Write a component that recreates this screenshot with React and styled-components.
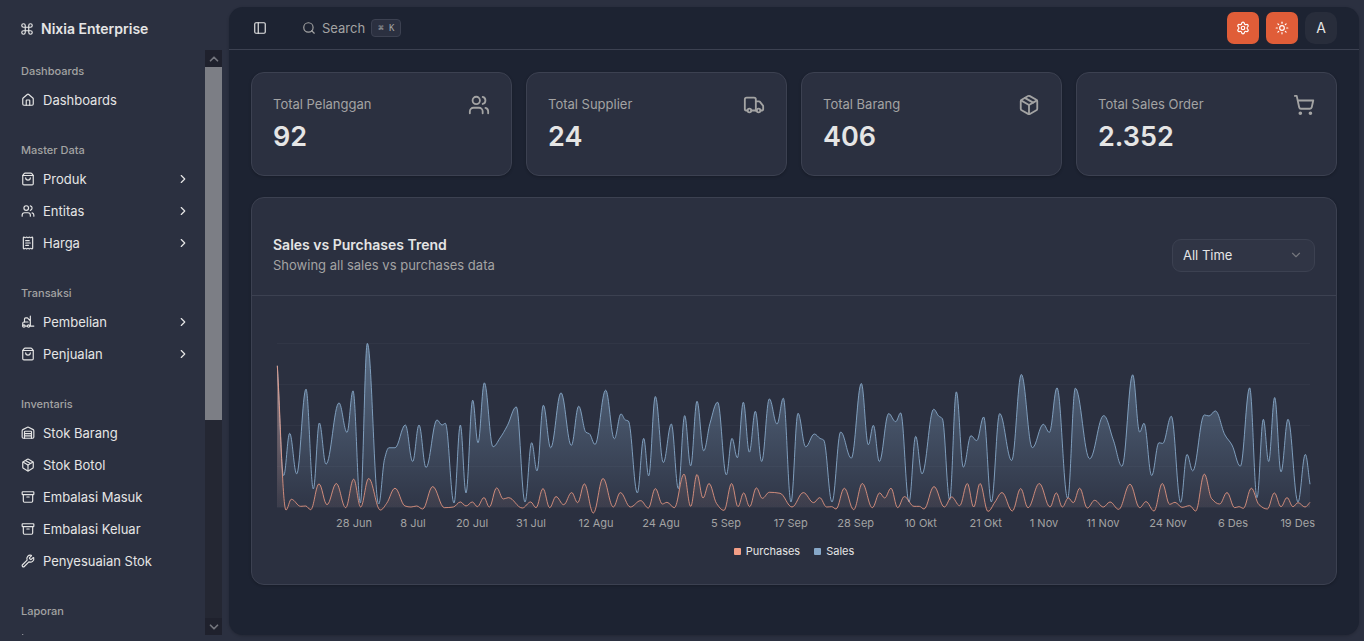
import React, { useLayoutEffect, useMemo, useRef, useState } from "react";
import styled, { createGlobalStyle, ThemeProvider } from "styled-components";
import {
  Archive,
  ChartColumn,
  ChevronDown,
  ChevronRight,
  ChevronUp,
  Command,
  Forklift,
  House,
  Package,
  PanelLeft,
  ReceiptText,
  Search,
  Settings,
  ShoppingBag,
  ShoppingCart,
  Sun,
  Truck,
  Users,
  Warehouse,
  Wrench,
} from "lucide-react";

const theme = {
  shell: "#2b3040",
  page: "#1d2332",
  card: "#2b3040",
  control: "#303545",
  border: "#3c4151",
  text: "#e5e5e5",
  muted: "#a3a3a3",
  accent: "#e05d38",
  sales: "#86a7c8",
  purchases: "#f39e86",
};

const GlobalStyle = createGlobalStyle`
  *, *::before, *::after { box-sizing: border-box; }
  body {
    margin: 0;
    background: ${theme.shell};
    color: ${theme.text};
    font-family: Inter, "Liberation Sans", sans-serif;
    font-size: 13px;
    line-height: 18px;
  }
  button, select { font: inherit; color: inherit; }
  h1, h2, p, ul { margin: 0; padding: 0; }
`;

/* ---------- data ---------- */

const menu = [
  { title: "Dashboards", items: [{ label: "Dashboards", icon: House }] },
  {
    title: "Master Data",
    items: [
      { label: "Produk", icon: ShoppingBag, nested: true },
      { label: "Entitas", icon: Users, nested: true },
      { label: "Harga", icon: ReceiptText, nested: true },
    ],
  },
  {
    title: "Transaksi",
    items: [
      { label: "Pembelian", icon: Forklift, nested: true },
      { label: "Penjualan", icon: ShoppingBag, nested: true },
    ],
  },
  {
    title: "Inventaris",
    items: [
      { label: "Stok Barang", icon: Warehouse },
      { label: "Stok Botol", icon: Package },
      { label: "Embalasi Masuk", icon: Archive },
      { label: "Embalasi Keluar", icon: Archive },
      { label: "Penyesuaian Stok", icon: Wrench },
    ],
  },
  { title: "Laporan", items: [{ icon: ChartColumn }] },
];

const stats = [
  { label: "Total Pelanggan", value: "92", icon: Users },
  { label: "Total Supplier", value: "24", icon: Truck },
  { label: "Total Barang", value: "406", icon: Package },
  { label: "Total Sales Order", value: "2.352", icon: ShoppingCart },
];

const TIME_MAX = 3099;
const VALUE_MAX = 490;

const sales = [
  [1, 422], [20, 94], [38, 220], [59, 99], [87, 352], [109, 54], [127, 251], [147, 128],
  [186, 311], [210, 223], [228, 347], [250, 12], [271, 489], [305, 9], [323, 145], [336, 177],
  [354, 177], [385, 245], [407, 136], [426, 245], [447, 118], [480, 260], [495, 245], [505, 250],
  [531, 12], [550, 245], [567, 42], [587, 319], [603, 192], [622, 371], [648, 180], [669, 206],
  [691, 243], [718, 299], [744, 15], [764, 192], [780, 108], [799, 304], [821, 177], [852, 341],
  [883, 184], [905, 301], [927, 223], [937, 219], [954, 187], [986, 349], [1012, 204],
  [1032, 278], [1045, 260], [1054, 257], [1081, 42], [1100, 205], [1115, 93], [1135, 330],
  [1159, 133], [1183, 248], [1204, 55], [1223, 273], [1241, 123], [1260, 316], [1280, 168],
  [1299, 250], [1322, 313], [1348, 96], [1365, 205], [1381, 147], [1399, 313], [1417, 164],
  [1435, 286], [1454, 136], [1477, 323], [1500, 248], [1519, 325], [1542, 15], [1563, 280],
  [1586, 180], [1612, 218], [1629, 205], [1640, 200], [1665, 15], [1691, 224], [1723, 146],
  [1753, 369], [1774, 186], [1789, 244], [1807, 136], [1835, 279], [1856, 255], [1871, 281],
  [1896, 15], [1916, 211], [1935, 99], [1970, 292], [1985, 272], [1996, 264], [2018, 22],
  [2038, 344], [2059, 119], [2082, 213], [2099, 198], [2120, 269], [2143, 15], [2168, 279],
  [2204, 139], [2233, 396], [2266, 177], [2299, 247], [2317, 223], [2340, 356], [2372, 26],
  [2395, 355], [2438, 144], [2480, 273], [2509, 200], [2535, 122], [2567, 395], [2588, 224],
  [2601, 250], [2624, 94], [2646, 192], [2657, 190], [2683, 271], [2711, 14], [2730, 157],
  [2747, 108], [2782, 275], [2796, 272], [2815, 287], [2844, 215], [2865, 185], [2890, 122],
  [2918, 356], [2940, 28], [2959, 262], [2975, 136], [2993, 327], [3012, 105], [3033, 262],
  [3063, 15], [3085, 157], [3099, 68],
];

const purchases = [
  [1, 422], [27, -9], [43, 23], [71, 2], [86, 3], [101, -8], [126, 69], [150, 7], [178, 70],
  [206, -2], [230, 83], [251, 0], [275, 85], [310, -9], [329, 11], [354, 56], [384, 3],
  [402, 0], [419, 3], [437, -6], [467, 61], [502, -2], [529, 0], [550, 15], [567, 3],
  [586, 15], [601, 1], [621, 28], [637, 0], [659, 57], [679, 24], [694, 28], [736, -3],
  [761, 15], [777, -2], [798, 55], [818, -2], [837, 31], [860, 7], [884, 43], [902, 13],
  [922, 69], [949, -18], [978, 85], [1009, 0], [1030, 43], [1060, 0], [1091, 19], [1114, -3],
  [1135, 55], [1156, 9], [1170, 14], [1192, -2], [1221, 98], [1241, 2], [1260, 97],
  [1278, 27], [1296, 70], [1319, 10], [1341, -10], [1364, 70], [1383, 1], [1400, 42],
  [1418, 1], [1438, 57], [1456, 26], [1477, 44], [1509, 41], [1545, 0], [1579, 43],
  [1610, 13], [1628, 28], [1649, 0], [1664, 1], [1677, -6], [1702, 56], [1730, -8],
  [1756, 70], [1786, -2], [1808, 42], [1823, 27], [1842, 56], [1862, -2], [1882, 31],
  [1911, 2], [1927, 2], [1941, -6], [1971, 61], [2002, 0], [2024, 30], [2048, 4], [2071, 70],
  [2090, 0], [2109, 70], [2133, -13], [2154, 15], [2175, 43], [2206, -12], [2231, 55],
  [2253, -2], [2287, 70], [2319, 0], [2338, 42], [2356, 0], [2374, 27], [2389, 13],
  [2408, 56], [2431, -3], [2453, 20], [2479, 0], [2499, 15], [2525, -7], [2559, 68],
  [2588, -2], [2607, 16], [2631, -12], [2656, 70], [2678, 8], [2694, 14], [2715, -1],
  [2738, 4], [2756, -12], [2782, 98], [2804, 25], [2828, 9], [2850, 43], [2873, -2],
  [2886, 1], [2899, -4], [2923, 56], [2946, 7], [2971, -6], [2992, 42], [3012, 1],
  [3030, 28], [3048, 1], [3063, 13], [3084, 0], [3099, 14],
];

const ticks = [
  [231, "28 Jun"], [408, "8 Jul"], [585, "20 Jul"], [762, "31 Jul"], [957, "12 Agu"],
  [1152, "24 Agu"], [1347, "5 Sep"], [1541, "17 Sep"], [1736, "28 Sep"], [1931, "10 Okt"],
  [2126, "21 Okt"], [2301, "1 Nov"], [2478, "11 Nov"], [2673, "24 Nov"], [2868, "6 Des"],
  [3062, "19 Des"],
];

/* ---------- sidebar ---------- */

const Shell = styled.div`
  display: flex;
  min-height: 100vh;
`;

const Sidebar = styled.aside`
  position: sticky;
  top: 0;
  flex: none;
  display: flex;
  flex-direction: column;
  width: 222px;
  height: 100vh;
  padding: 7px 0 6px 7px;
`;

const Brand = styled.a`
  display: flex;
  align-items: center;
  gap: 7px;
  flex: none;
  height: 43px;
  padding-left: 13px;
  color: inherit;
  text-decoration: none;
  font-size: 14px;
  font-weight: 600;
`;

const SidebarBody = styled.div`
  display: flex;
  flex: 1;
  min-height: 0;
`;

const Nav = styled.nav`
  flex: 1;
  min-width: 0;
  overflow: hidden;
  padding: 7px 7px 0;
`;

const Group = styled.section`
  margin-bottom: 21px;
`;

const GroupTitle = styled.h2`
  height: 28px;
  padding: 0 7px;
  color: ${(p) => p.theme.muted};
  font-size: 11px;
  font-weight: 500;
  line-height: 28px;
`;

const MenuList = styled.ul`
  display: flex;
  flex-direction: column;
  gap: 2px;
  list-style: none;
`;

const MenuLink = styled.a`
  display: flex;
  align-items: center;
  gap: 8px;
  height: 30px;
  padding: 0 8px 0 7px;
  color: inherit;
  text-decoration: none;

  svg { flex: none; }
  span { flex: 1; }
`;

const Scrollbar = styled.div`
  display: flex;
  flex-direction: column;
  flex: none;
  width: 17px;
  background: #242733;
`;

const ScrollArrow = styled.div`
  display: flex;
  align-items: center;
  justify-content: center;
  height: 17px;
  background: #1f212d;
  color: #74767e;
`;

const ScrollTrack = styled.div`
  flex: 1;
`;

const ScrollThumb = styled.div`
  height: 64%;
  background: #7c7e85;
`;

/* ---------- main panel ---------- */

const Panel = styled.div`
  flex: 1;
  min-width: 0;
  margin: 7px 5px 6px 7px;
  border-radius: 14px;
  background: ${(p) => p.theme.page};
  box-shadow: 0 1px 3px rgba(0, 0, 0, 0.2);
`;

const Topbar = styled.header`
  display: flex;
  align-items: center;
  height: 43px;
  padding: 0 22px;
  border-bottom: 1px solid ${(p) => p.theme.border};
`;

const PlainButton = styled.button`
  display: flex;
  align-items: center;
  gap: 6px;
  height: 32px;
  padding: 0 2px;
  border: 0;
  background: none;
  color: ${(p) => (p.$muted ? p.theme.muted : p.theme.text)};
  cursor: pointer;
`;

const SearchButton = styled(PlainButton)`
  margin-left: 31px;
`;

const Shortcut = styled.kbd`
  height: 18px;
  padding: 0 6px;
  border: 1px solid ${(p) => p.theme.border};
  border-radius: 4px;
  background: ${(p) => p.theme.card};
  font-family: "DejaVu Sans Mono", "Liberation Mono", monospace;
  font-size: 9px;
  line-height: 16px;
`;

const Actions = styled.div`
  display: flex;
  gap: 7px;
  margin-left: auto;
`;

const ActionButton = styled.button`
  display: grid;
  place-items: center;
  width: 32px;
  height: 32px;
  padding: 0;
  border: 0;
  border-radius: ${(p) => (p.$quiet ? 10 : 7)}px;
  background: ${(p) => (p.$quiet ? "#282d3b" : p.theme.accent)};
  color: ${(p) => (p.$quiet ? p.theme.text : "#ffffff")};
  font-size: 14px;
  cursor: pointer;
`;

const Content = styled.main`
  display: flex;
  flex-direction: column;
  gap: 21px;
  padding: 22px;
`;

const StatGrid = styled.div`
  display: grid;
  grid-template-columns: repeat(4, 1fr);
  gap: 14px;
`;

const Card = styled.section`
  border: 1px solid ${(p) => p.theme.border};
  border-radius: 13px;
  background: ${(p) => p.theme.card};
  box-shadow: 0 1px 3px rgba(0, 0, 0, 0.2);
`;

const StatCard = styled(Card)`
  display: flex;
  justify-content: space-between;
  height: 104px;
  padding: 21px;
  color: ${(p) => p.theme.muted};
`;

const StatLabel = styled.h2`
  font-size: 13px;
  font-weight: 400;
  line-height: 20px;
`;

const StatValue = styled.p`
  margin-top: 5px;
  color: ${(p) => p.theme.text};
  font-size: 27px;
  font-weight: 600;
  line-height: 36px;
`;

/* ---------- chart card ---------- */

const ChartHeader = styled.header`
  display: flex;
  align-items: center;
  justify-content: space-between;
  height: 98px;
  padding: 18px 21px 0;
  border-bottom: 1px solid ${(p) => p.theme.border};
`;

const ChartHeading = styled.div`
  padding-bottom: 2px;
`;

const ChartTitle = styled.h1`
  font-size: 14px;
  font-weight: 600;
  line-height: 20px;
`;

const ChartSubtitle = styled.p`
  color: ${(p) => p.theme.muted};
  line-height: 20px;
`;

const SelectBox = styled.label`
  position: relative;
  display: block;
  width: 143px;

  svg {
    position: absolute;
    top: 9px;
    right: 12px;
    color: ${(p) => p.theme.muted};
    opacity: 0.6;
    pointer-events: none;
  }
`;

const Select = styled.select`
  width: 100%;
  height: 33px;
  padding: 0 10px 2px;
  border: 1px solid ${(p) => p.theme.border};
  border-radius: 9px;
  background: ${(p) => p.theme.control};
  appearance: none;
`;

const ChartBody = styled.div`
  padding: 43px 21px 25px;

  svg {
    display: block;
    width: 100%;
    height: 196px;
  }
`;

const Legend = styled.ul`
  display: flex;
  justify-content: center;
  gap: 14px;
  margin-top: 8px;
  font-size: 11px;
  line-height: 16px;
  list-style: none;
`;

const LegendItem = styled.li`
  display: flex;
  align-items: center;
  gap: 5px;

  &::before {
    content: "";
    width: 7px;
    height: 7px;
    border-radius: 1px;
    background: ${(p) => p.$color};
  }
`;

const PLOT = { left: 4, right: 5, top: 4, base: 168 };

/* Smooth line through the points that never overshoots a peak. */
function smoothPath(points) {
  const n = points.length;
  const slope = [];
  for (let i = 0; i < n - 1; i++) {
    slope.push((points[i + 1][1] - points[i][1]) / (points[i + 1][0] - points[i][0]));
  }
  const tangent = points.map((_, i) => {
    if (i === 0) return slope[0];
    if (i === n - 1) return slope[n - 2];
    const a = slope[i - 1];
    const b = slope[i];
    return a * b <= 0 ? 0 : (2 * a * b) / (a + b);
  });
  let d = `M${points[0][0]},${points[0][1]}`;
  for (let i = 0; i < n - 1; i++) {
    const [x0, y0] = points[i];
    const [x1, y1] = points[i + 1];
    const h = (x1 - x0) * 0.38;
    d += `C${x0 + h},${y0 + h * tangent[i]} ${x1 - h},${y1 - h * tangent[i + 1]} ${x1},${y1}`;
  }
  return d;
}

function TrendChart() {
  const ref = useRef(null);
  const [width, setWidth] = useState(1042);

  useLayoutEffect(() => {
    const measure = () => setWidth(ref.current.getBoundingClientRect().width);
    measure();
    const observer = new ResizeObserver(measure);
    observer.observe(ref.current);
    return () => observer.disconnect();
  }, []);

  const end = width - PLOT.right;
  const x = (t) => PLOT.left + (t / TIME_MAX) * (end - PLOT.left);
  const y = (v) => PLOT.base - (v / VALUE_MAX) * (PLOT.base - PLOT.top);

  const [salesLine, purchasesLine] = useMemo(
    () => [sales, purchases].map((rows) => smoothPath(rows.map(([t, v]) => [x(t), y(v)]))),
    [width]
  );
  const close = `L${end},${PLOT.base}L${PLOT.left},${PLOT.base}Z`;

  return (
    <svg ref={ref} role="img" aria-label="Sales vs Purchases Trend">
      <defs>
        <linearGradient id="fillSales" x1="0" y1="0" x2="0" y2="1">
          <stop offset="5%" stopColor={theme.sales} stopOpacity="0.48" />
          <stop offset="95%" stopColor={theme.sales} stopOpacity="0.07" />
        </linearGradient>
        <linearGradient id="fillPurchases" x1="0" y1="0" x2="0" y2="1">
          <stop offset="5%" stopColor={theme.purchases} stopOpacity="0.4" />
          <stop offset="95%" stopColor={theme.purchases} stopOpacity="0.06" />
        </linearGradient>
      </defs>
      <g stroke={theme.border} strokeOpacity="0.4" shapeRendering="crispEdges">
        {[0, 1, 2, 3, 4].map((i) => {
          const gy = PLOT.top + (i * (PLOT.base - PLOT.top)) / 4;
          return <line key={i} x1={PLOT.left} x2={end} y1={gy} y2={gy} />;
        })}
      </g>
      <path d={salesLine + close} fill="url(#fillSales)" />
      <path d={salesLine} fill="none" stroke={theme.sales} strokeOpacity="0.9" />
      <path d={purchasesLine + close} fill="url(#fillPurchases)" />
      <path d={purchasesLine} fill="none" stroke={theme.purchases} strokeOpacity="0.8" />
      <g fill={theme.muted} fontSize="11" textAnchor="middle">
        {ticks.map(([t, label]) => (
          <text key={label} x={x(t)} y={188}>
            {label}
          </text>
        ))}
      </g>
    </svg>
  );
}

export default function App() {
  return (
    <ThemeProvider theme={theme}>
      <GlobalStyle />
      <Shell>
        <Sidebar>
          <Brand href="#">
            <Command size={14} />
            Nixia Enterprise
          </Brand>
          <SidebarBody>
            <Nav>
              {menu.map((group) => (
                <Group key={group.title}>
                  <GroupTitle>{group.title}</GroupTitle>
                  <MenuList>
                    {group.items.map(({ label, icon: Icon, nested }) => (
                      <li key={label ?? group.title}>
                        <MenuLink href="#" aria-label={label ?? group.title}>
                          <Icon size={14} />
                          {label && <span>{label}</span>}
                          {nested && <ChevronRight size={14} />}
                        </MenuLink>
                      </li>
                    ))}
                  </MenuList>
                </Group>
              ))}
            </Nav>
            <Scrollbar aria-hidden="true">
              <ScrollArrow>
                <ChevronUp size={14} strokeWidth={3} />
              </ScrollArrow>
              <ScrollTrack>
                <ScrollThumb />
              </ScrollTrack>
              <ScrollArrow>
                <ChevronDown size={14} strokeWidth={3} />
              </ScrollArrow>
            </Scrollbar>
          </SidebarBody>
        </Sidebar>
        <Panel>
          <Topbar>
            <PlainButton aria-label="Toggle sidebar">
              <PanelLeft size={14} />
            </PlainButton>
            <SearchButton $muted>
              <Search size={14} />
              Search
              <Shortcut>⌘ K</Shortcut>
            </SearchButton>
            <Actions>
              <ActionButton aria-label="Settings">
                <Settings size={14} />
              </ActionButton>
              <ActionButton aria-label="Theme">
                <Sun size={14} />
              </ActionButton>
              <ActionButton $quiet>A</ActionButton>
            </Actions>
          </Topbar>
          <Content>
            <StatGrid>
              {stats.map(({ label, value, icon: Icon }) => (
                <StatCard key={label}>
                  <div>
                    <StatLabel>{label}</StatLabel>
                    <StatValue>{value}</StatValue>
                  </div>
                  <Icon size={22} />
                </StatCard>
              ))}
            </StatGrid>
            <Card>
              <ChartHeader>
                <ChartHeading>
                  <ChartTitle>Sales vs Purchases Trend</ChartTitle>
                  <ChartSubtitle>Showing all sales vs purchases data</ChartSubtitle>
                </ChartHeading>
                <SelectBox>
                  <Select aria-label="Time range" defaultValue="all">
                    <option value="all">All Time</option>
                  </Select>
                  <ChevronDown size={14} />
                </SelectBox>
              </ChartHeader>
              <ChartBody>
                <TrendChart />
                <Legend>
                  <LegendItem $color={theme.purchases}>Purchases</LegendItem>
                  <LegendItem $color={theme.sales}>Sales</LegendItem>
                </Legend>
              </ChartBody>
            </Card>
          </Content>
        </Panel>
      </Shell>
    </ThemeProvider>
  );
}
